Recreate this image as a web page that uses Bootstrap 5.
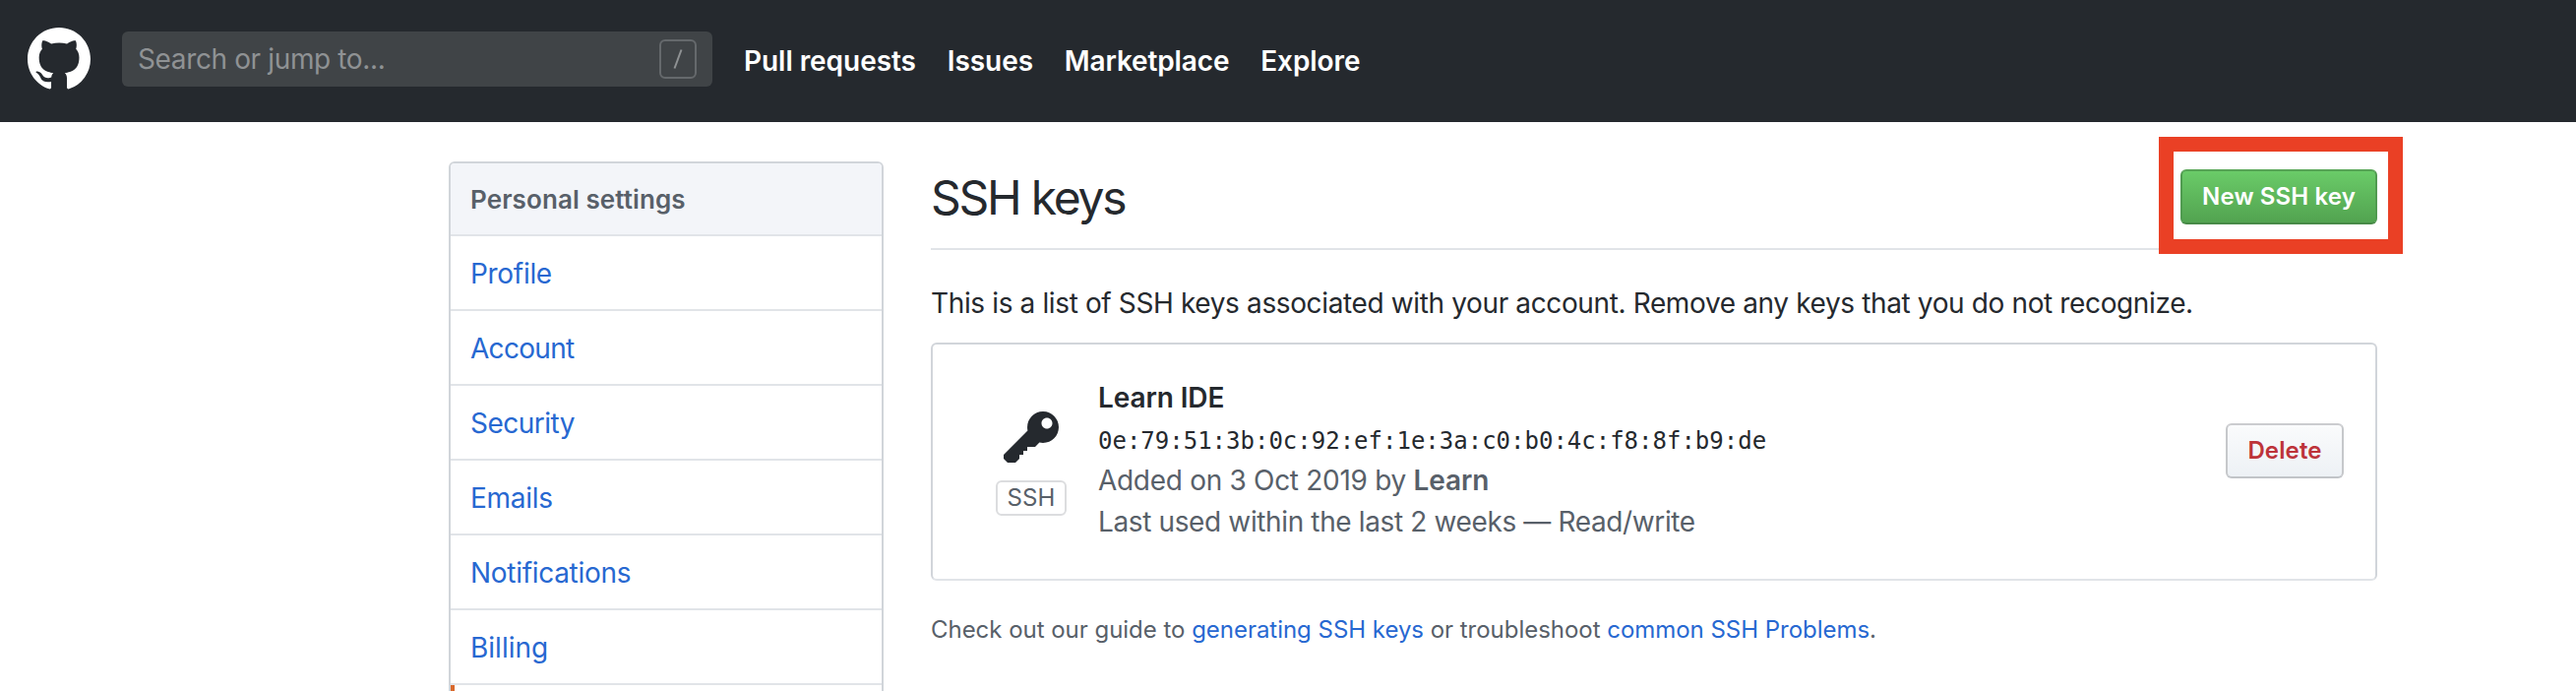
<!DOCTYPE html>
<html lang="en">
<head>
<meta charset="utf-8">
<meta name="viewport" content="width=device-width, initial-scale=1">
<title>SSH keys</title>
<link href="https://cdn.jsdelivr.net/npm/bootstrap@5.3.0/dist/css/bootstrap.min.css" rel="stylesheet">
<style>
body{font-family:Inter,"Liberation Sans",sans-serif;font-size:28px;line-height:42px;letter-spacing:-.37px;color:#25292e;background:#fff;overflow:hidden;height:702px}
a{color:#2768d1;text-decoration:none}
.topbar{height:124px;background:#25292e;padding:0 28px}
.logo{margin-top:-4px}
.searchbox{width:600px;height:56px;margin:-4px 32px 0 32px;padding:0 16px;border-radius:6px;background:#404447;color:#8f9294}
.slash{width:38px;height:40px;border:2px solid #65696c;border-radius:6px}
.topnav{gap:31.8px}
.topnav .nav-link{color:#fff;font-weight:600;padding:0;letter-spacing:-.05px}
.topnav .nav-link:nth-child(3){letter-spacing:-.13px}
.layout{padding:40px 202px 0 456px;gap:48px}
.menu{width:442px;height:560px;border:2px solid #d1d5da;border-radius:6px}
.menu-head{height:74px;line-height:73px;font-size:26px;font-weight:600;letter-spacing:.1px;color:#586069;background:#f3f5f9;padding-left:20px;border-bottom:2px solid #e1e4e8}
.menu a{display:block;height:76px;line-height:76px;padding-left:20px;border-bottom:2px solid #e1e4e8;letter-spacing:-.3px}
.menu a:nth-of-type(2){letter-spacing:-.7px}
.menu a:nth-of-type(3){letter-spacing:-.5px}
.menu a:nth-of-type(6){letter-spacing:0}
.menu a.active{border-left:4px solid #d9692c}
.pagehead{height:90px;border-bottom:2px solid #e1e4e8}
h1{font-size:48px;font-weight:400;line-height:74px;margin:0;letter-spacing:-2.25px}
.newkey{width:200px;height:56px;margin-top:8px}
.btn-new,.btn-del{height:56px;padding:0;font-size:24px;line-height:52px;font-weight:600;border-radius:6px;letter-spacing:.13px}
.btn-new,.btn-new:hover{width:200px;color:#fff;border:2px solid;border-color:#57a456 #509b50 #478a47;background:linear-gradient(#6acb68,#52a350)}
.highlight-box{position:absolute;left:-22px;top:-33px;width:248px;height:119px;border:15px solid #ea4025}
.btn-del{width:120px;color:#bd333a;border:2px solid;border-color:#cbcccf #c6c8cb #c1c4c8;background:linear-gradient(#fafbfc,#edf1f5);margin:-22px 32px 0 0}
.intro{margin-top:32.5px;height:61.5px}
.keycard{height:242px;border:2px solid #d1d5da;border-bottom-color:#e1e4e8;border-radius:6px}
.keykind{width:72px;margin:64px 32px 0 64px}
.keykind svg{display:block}
.ssh-label{width:72px;height:36px;margin-top:10px;border:2px solid #dcdddf;border-radius:6px;font-size:24px;line-height:32px;letter-spacing:.1px;color:#586069}
.keyinfo{margin-top:33px}
.keyinfo strong{font-weight:600;letter-spacing:-.1px}
.added{letter-spacing:-.3px}
.mono{height:42px;line-height:46px;font-family:"DejaVu Sans Mono",monospace;font-size:24px;letter-spacing:0}
.muted{color:#586069}
.help{margin-top:31.5px;font-size:24px;line-height:36px;letter-spacing:-.03px}
</style>
</head>
<body>
<header class="topbar d-flex align-items-center">
  <svg class="logo" width="64" height="64" viewBox="0 0 16 16" fill="#fff" aria-hidden="true"><path fill-rule="evenodd" d="M8 0C3.58 0 0 3.58 0 8c0 3.54 2.29 6.53 5.47 7.59.4.07.55-.17.55-.38 0-.19-.01-.82-.01-1.49-2.01.37-2.53-.49-2.69-.94-.09-.23-.48-.94-.82-1.13-.28-.15-.68-.52-.01-.53.63-.01 1.08.58 1.23.82.72 1.21 1.87.87 2.33.66.07-.52.28-.87.51-1.07-1.78-.2-3.64-.89-3.64-3.95 0-.87.31-1.59.82-2.15-.08-.2-.36-1.02.08-2.12 0 0 .67-.21 2.2.82.64-.18 1.32-.27 2-.27.68 0 1.36.09 2 .27 1.53-1.04 2.2-.82 2.2-.82.44 1.1.16 1.92.08 2.12.51.56.82 1.27.82 2.15 0 3.07-1.87 3.75-3.65 3.95.29.25.54.73.54 1.48 0 1.07-.01 1.93-.01 2.2 0 .21.15.46.55.38A8.013 8.013 0 0 0 16 8c0-4.42-3.58-8-8-8z"/></svg>
  <div class="searchbox d-flex align-items-center justify-content-between">
    <span>Search or jump to...</span>
    <span class="slash d-flex align-items-center justify-content-center"><svg width="10" height="20" viewBox="0 0 10 20" fill="none" stroke="#8f9294" stroke-width="2"><path d="M1.5 19.5 8.5 .5"/></svg></span>
  </div>
  <nav class="topnav nav">
    <a class="nav-link" href="#">Pull requests</a>
    <a class="nav-link" href="#">Issues</a>
    <a class="nav-link" href="#">Marketplace</a>
    <a class="nav-link" href="#">Explore</a>
  </nav>
</header>
<div class="layout d-flex align-items-start">
  <nav class="menu flex-shrink-0 overflow-hidden">
    <div class="menu-head">Personal settings</div>
    <a href="#">Profile</a>
    <a href="#">Account</a>
    <a href="#">Security</a>
    <a href="#">Emails</a>
    <a href="#">Notifications</a>
    <a href="#">Billing</a>
    <a href="#" class="active" aria-label="Current section"></a>
  </nav>
  <main class="flex-grow-1">
    <div class="pagehead d-flex justify-content-between align-items-start">
      <h1>SSH keys</h1>
      <div class="newkey position-relative">
        <button class="btn btn-new" type="button">New SSH key</button>
        <div class="highlight-box"></div>
      </div>
    </div>
    <p class="intro mb-0">This is a list of SSH keys associated with your account. Remove any keys that you do not recognize.</p>
    <div class="keycard d-flex">
      <div class="keykind">
        <svg class="mx-auto" width="56" height="64" viewBox="0 0 14 16" fill="#25292e" aria-hidden="true"><path fill-rule="evenodd" d="M12.83 2.17C12.08 1.42 11.14 1.03 10 1c-1.13.03-2.08.42-2.83 1.17S6.04 3.86 6.01 5c0 .3.03.59.09.89L0 12v1l1 1h2l1-1v-1h1v-1h1v-1h2l1.09-1.11c.3.08.59.11.91.11 1.14-.03 2.08-.42 2.83-1.17S13.97 6.14 14 5c-.03-1.14-.42-2.08-1.17-2.83zM11 5.38c-.77 0-1.38-.61-1.38-1.38 0-.77.61-1.38 1.38-1.38.77 0 1.38.61 1.38 1.38 0 .77-.61 1.38-1.38 1.38z"/></svg>
        <div class="ssh-label text-center">SSH</div>
      </div>
      <div class="keyinfo flex-grow-1">
        <div><strong>Learn IDE</strong></div>
        <div class="mono">0e:79:51:3b:0c:92:ef:1e:3a:c0:b0:4c:f8:8f:b9:de</div>
        <div class="added muted">Added on 3 Oct 2019 by <strong>Learn</strong></div>
        <div class="muted">Last used within the last 2 weeks — Read/write</div>
      </div>
      <button class="btn btn-del align-self-center" type="button">Delete</button>
    </div>
    <p class="help muted mb-0">Check out our guide to <a href="#">generating SSH keys</a> or troubleshoot <a href="#">common SSH Problems</a>.</p>
  </main>
</div>
</body>
</html>
